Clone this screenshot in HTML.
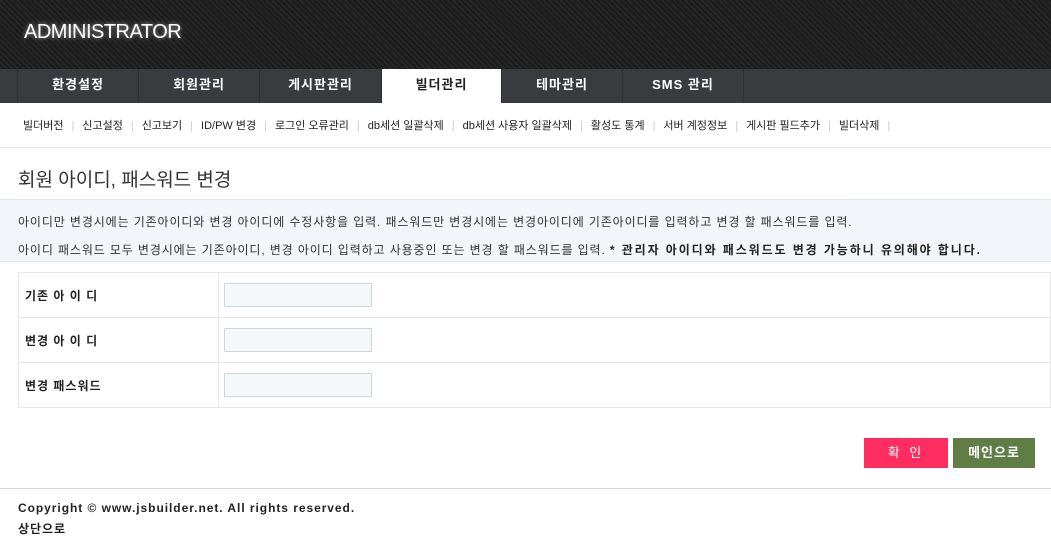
<!DOCTYPE html>
<html><head><meta charset="utf-8"><style>
*{margin:0;padding:0;box-sizing:border-box}
body{width:1051px;height:544px;overflow:hidden;background:#fff;font-family:"Liberation Sans","Noto Sans CJK KR","NanumGothic",sans-serif;color:#222;font-size:12px;position:relative}
.hd{position:absolute;left:0;top:0;width:1051px;height:69px;background:repeating-linear-gradient(45deg,#262626 0,#262626 2px,#1c1c1c 2px,#1c1c1c 4px)}
.hd span{position:absolute;left:24px;top:21px;color:#fff;font-size:20px;letter-spacing:-0.5px;text-shadow:0 0 4px rgba(255,255,255,.6)}
.nav{position:absolute;left:0;top:69px;width:1051px;height:34px;background:#3a3b3f}
.nav div{position:absolute;top:0;height:34px;line-height:32px;text-align:center;color:#fff;font-weight:bold;font-size:13px;border-left:1px solid #2e2f33;letter-spacing:1px}
.nav .on{background:#fff;color:#222}
.sub{position:absolute;left:0;top:103px;width:1051px;height:45px;border-bottom:1px solid #e6e6e6;padding:14px 0 0 23px;font-size:11px;white-space:nowrap;letter-spacing:0}
.sub i{font-style:normal;color:#ccc;margin:0 8px}
h1{position:absolute;left:18px;top:165px;font-size:19px;font-weight:normal;color:#333}
.info{position:absolute;left:0;top:199px;width:1051px;height:63px;background:#f2f5f9;border-top:1px solid #e4e8ec;border-bottom:1px solid #e4e8ec;font-size:12px;color:#333;padding:8px 0 0 18px;line-height:28px;letter-spacing:.88px;white-space:nowrap}
.info b{letter-spacing:1.9px;color:#222}
table{position:absolute;left:18px;top:272px;width:1033px;border-collapse:collapse}
td{border:1px solid #e6e6e6;height:45px;font-weight:bold;font-size:12px}
td.l{width:200px;padding-left:6px;letter-spacing:1px}
td input{margin-left:5px;width:148px;height:24px;border:1px solid #ccd8dc;background:#f5f8f9;display:block}
.b1{position:absolute;left:864px;top:438px;width:84px;height:30px;background:#ff2d60;color:#fff;text-align:center;line-height:30px;font-size:13px;letter-spacing:3px}
.b2{position:absolute;left:953px;top:438px;width:82px;height:30px;background:#617d46;color:#fff;text-align:center;line-height:29px;font-size:13px;font-weight:bold;letter-spacing:1px}
.ft{position:absolute;left:0;top:488px;width:1051px;border-top:1px solid #d0d8dc;padding:9px 0 0 18px;font-weight:bold;font-size:12px;line-height:21px;letter-spacing:.95px}
</style></head><body>
<div class="hd"><span>ADMINISTRATOR</span></div>
<div class="nav">
<div style="left:17px;width:121px">환경설정</div>
<div style="left:138px;width:121px">회원관리</div>
<div style="left:259px;width:122px">게시판관리</div>
<div class="on" style="left:381px;width:120px">빌더관리</div>
<div style="left:501px;width:121px">테마관리</div>
<div style="left:622px;width:121px">SMS 관리</div>
<div style="left:743px;width:1px"></div>
</div>
<div class="sub">빌더버전<i>|</i>신고설정<i>|</i>신고보기<i>|</i>ID/PW 변경<i>|</i>로그인 오류관리<i>|</i>db세션 일괄삭제<i>|</i>db세션 사용자 일괄삭제<i>|</i>활성도 통계<i>|</i>서버 계정정보<i>|</i>게시판 필드추가<i>|</i>빌더삭제<i>|</i></div>
<h1>회원 아이디, 패스워드 변경</h1>
<div class="info">아이디만 변경시에는 기존아이디와 변경 아이디에 수정사항을 입력. 패스워드만 변경시에는 변경아이디에 기존아이디를 입력하고 변경 할 패스워드를 입력.<br>아이디 패스워드 모두 변경시에는 기존아이디, 변경 아이디 입력하고 사용중인 또는 변경 할 패스워드를 입력. <b>* 관리자 아이디와 패스워드도 변경 가능하니 유의해야 합니다.</b></div>
<table>
<tr><td class="l">기존 아 이 디</td><td><input></td></tr>
<tr><td class="l">변경 아 이 디</td><td><input></td></tr>
<tr><td class="l">변경 패스워드</td><td><input></td></tr>
</table>
<div class="b1">확 인</div>
<div class="b2">메인으로</div>
<div class="ft">Copyright © www.jsbuilder.net. All rights reserved.<br>상단으로</div>
</body></html>
